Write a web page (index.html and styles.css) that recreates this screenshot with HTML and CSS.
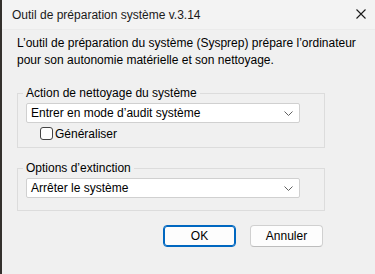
FILE: index.html
```html
<!DOCTYPE html>
<html lang="fr">
<head>
  <meta charset="UTF-8">
  <meta name="viewport" content="width=device-width, initial-scale=1.0">
  <title>Sysprep</title>
  <link rel="stylesheet" href="styles.css">
</head>
<body>

  <div class="window">
    <div class="titlebar">
      <span class="title">Outil de préparation système v.3.14</span>
      <svg class="close" width="10" height="10" viewBox="0 0 10 10">
        <path d="M0.5 0.5 L9.5 9.5 M9.5 0.5 L0.5 9.5" stroke="#1a1a1a" stroke-width="1.1" fill="none"/>
      </svg>
    </div>

    <div class="content">
      <p class="intro">L’outil de préparation du système (Sysprep) prépare l’ordinateur<br>pour son autonomie matérielle et son nettoyage.</p>

      <fieldset class="group">
        <legend>Action de nettoyage du système</legend>
        <div class="select">
          <span>Entrer en mode d’audit système</span>
          <svg width="9" height="5" viewBox="0 0 9 5"><path d="M0.5 0.5 L4.5 4.5 L8.5 0.5" stroke="#606060" fill="none"/></svg>
        </div>
        <label class="check"><span class="box"></span>Généraliser</label>
      </fieldset>

      <fieldset class="group group-last">
        <legend>Options d’extinction</legend>
        <div class="select">
          <span>Arrêter le système</span>
          <svg width="9" height="5" viewBox="0 0 9 5"><path d="M0.5 0.5 L4.5 4.5 L8.5 0.5" stroke="#606060" fill="none"/></svg>
        </div>
      </fieldset>

      <div class="buttons">
        <button class="btn btn-default">OK</button>
        <button class="btn">Annuler</button>
      </div>
    </div>
  </div>

</body>
</html>
```

FILE: styles.css
```css
html, body {
  margin: 0;
  padding: 0;
}
body {
  font-family: "Liberation Sans", Arial, sans-serif;
  font-size: 12px;
  color: #000;
  background-color: #f0f0f0;
}
.window {
  height: 274px;
  border-left: 2px solid #33302c;
  background-color: #f0f0f0;
}
.titlebar {
  height: 30px;
  display: flex;
  align-items: center;
  justify-content: space-between;
  padding: 0 9px 0 10px;
  background-color: #f3f3f3;
  border-bottom: 1px solid #ebebeb;
  box-sizing: border-box;
}
.title {
  color: #1a1a1a;
}
.close {
  margin-top: -2px;
}
.content {
  padding: 5px 0 0 15px;
}
.intro {
  margin: 0;
  white-space: nowrap;
  line-height: 17px;
}
.group {
  width: 308px;
  box-sizing: border-box;
  margin: 16px 0 0 0;
  padding: 2px 24px 5px 8px;
  border: 1px solid #dcdcdc;
  min-width: 0;
}
.group legend {
  padding: 0 3px;
  margin-left: -3px;
  line-height: 16px;
}
.group-last {
  margin-top: 12px;
  padding-bottom: 12px;
}
.select {
  height: 20px;
  box-sizing: border-box;
  display: flex;
  align-items: center;
  justify-content: space-between;
  padding: 0 6px 0 4px;
  background-color: #fff;
  border: 1px solid #d0d0d0;
  border-radius: 2px;
}
.check {
  display: flex;
  align-items: center;
  height: 17px;
  margin: 2px 0 0 14px;
}
.box {
  width: 13px;
  height: 13px;
  box-sizing: border-box;
  border: 1px solid #444;
  border-radius: 3px;
  background-color: #fff;
  margin-right: 2px;
}
.buttons {
  display: flex;
  gap: 14px;
  width: 306px;
  justify-content: flex-end;
  margin-top: 14px;
}
.btn {
  width: 73px;
  height: 22px;
  font-family: inherit;
  font-size: 12px;
  color: #000;
  background-color: #fdfdfd;
  border: 1px solid #d0d0d0;
  border-bottom-color: #bdbdbd;
  border-radius: 4px;
  padding: 0;
}
.btn-default {
  border: 1px solid #0067c0;
  box-shadow: inset 0 0 0 1px #0067c0;
}
```
